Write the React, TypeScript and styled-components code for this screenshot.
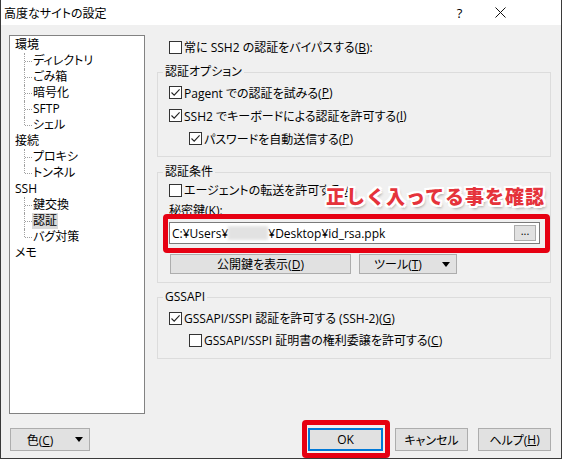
import styled, { createGlobalStyle } from 'styled-components';

const GlobalStyle = createGlobalStyle`
  html, body {
    margin: 0;
    padding: 0;
    background: #ffffff;
  }
  body {
    font-family: "Open Sans", "Noto Sans CJK JP", sans-serif;
    font-size: 12px;
    color: #000;
    font-feature-settings: "palt";
  }
`;

type TreeNode = { label: string; children: string[] };

const tree: TreeNode[] = [
  { label: '環境', children: ['ディレクトリ', 'ごみ箱', '暗号化', 'SFTP', 'シェル'] },
  { label: '接続', children: ['プロキシ', 'トンネル'] },
  { label: 'SSH', children: ['鍵交換', '認証', 'バグ対策'] },
  { label: 'メモ', children: [] },
];

const Check = ({ checked }: { checked?: boolean }) => (
  <Box>
    {checked && (
      <svg width="11" height="11" viewBox="0 0 11 11">
        <path d="M1.5 5.5 L4.2 8.2 L9.6 2.4" fill="none" stroke="#222" strokeWidth="1.1" />
      </svg>
    )}
  </Box>
);

const App = () => {
  return (
    <>
      <GlobalStyle />
      <Window>
        <TitleBar>
          <Title>高度なサイトの設定</Title>
          <TitleButton>?</TitleButton>
          <TitleButton>
            <svg width="11" height="11" viewBox="0 0 11 11">
              <path d="M0.5 0.5 L10.5 10.5 M10.5 0.5 L0.5 10.5" stroke="#111" strokeWidth="1" />
            </svg>
          </TitleButton>
        </TitleBar>

        <Body>
          <Main>
            <Tree>
              {tree.map((node) => (
                <div key={node.label}>
                  <TreeItem>{node.label}</TreeItem>
                  {node.children.map((c, i) => (
                    <Child key={c} $last={i === node.children.length - 1}>
                      <ItemText $selected={c === '認証'}>{c}</ItemText>
                    </Child>
                  ))}
                </div>
              ))}
            </Tree>

            <Panel>
              <TopRow>
                <Check />
                常に SSH2 の認証をバイパスする(<u>B</u>):
              </TopRow>

              <Group>
                <Legend>認証オプション</Legend>
                <GroupBody $top={1} $bottom={6}>
                  <CheckRow>
                    <Check checked />
                    Pagent での認証を試みる(<u>P</u>)
                  </CheckRow>
                  <CheckRow>
                    <Check checked />
                    SSH2 でキーボードによる認証を許可する(<u>I</u>)
                  </CheckRow>
                  <CheckRow $indent>
                    <Check checked />
                    パスワードを自動送信する(<u>P</u>)
                  </CheckRow>
                </GroupBody>
              </Group>

              <Group $gap={7}>
                <Legend>認証条件</Legend>
                <GroupBody $top={0} $bottom={8}>
                  <CheckRow $h={20}>
                    <Check />
                    エージェントの転送を許可する(<u>A</u>)
                  </CheckRow>
                  <KeyLabel>
                    秘密鍵(<u>K</u>):
                  </KeyLabel>
                  <FieldWrap>
                    <Field>
                      C:¥Users¥<Blur />¥Desktop¥id_rsa.ppk
                      <BrowseButton>...</BrowseButton>
                    </Field>
                    <RedFrame $t={-8} $l={-6} $r={-10} $b={-9} />
                  </FieldWrap>
                  <ButtonRow>
                    <Button $w={181} $h={20}>
                      公開鍵を表示(<u>D</u>)
                    </Button>
                    <Button $w={98} $h={20}>
                      <SplitLabel>
                        ツール(<u>T</u>)
                      </SplitLabel>
                      <Arrow />
                    </Button>
                  </ButtonRow>
                </GroupBody>
                <Annotation>正しく入ってる事を確認</Annotation>
              </Group>

              <Group $gap={6}>
                <Legend>GSSAPI</Legend>
                <GroupBody $top={2} $bottom={7}>
                  <CheckRow $h={22}>
                    <Check checked />
                    GSSAPI/SSPI 認証を許可する (SSH-2)(<u>G</u>)
                  </CheckRow>
                  <CheckRow $h={22} $indent>
                    <Check />
                    GSSAPI/SSPI 証明書の権利委譲を許可する(<u>C</u>)
                  </CheckRow>
                </GroupBody>
              </Group>
            </Panel>
          </Main>

          <Footer>
            <Button $w={80}>
              <SplitLabel>
                色(<u>C</u>)
              </SplitLabel>
              <Arrow />
            </Button>
            <OkWrap>
              <Button $w={75} $primary>
                OK
              </Button>
              <RedFrame $t={-8} $l={-6} $r={-7} $b={-7} />
            </OkWrap>
            <Button $w={73} $gap={12}>
              キャンセル
            </Button>
            <Button $w={73} $gap={10}>
              ヘルプ(<u>H</u>)
            </Button>
          </Footer>
        </Body>
      </Window>
    </>
  );
};

export default App;

const Window = styled.div`
  width: 562px;
  height: 459px;
  box-sizing: border-box;
  border: 1px solid #3a3a3a;
  border-top: none;
  background: #f0f0f0;
  display: flex;
  flex-direction: column;
`;

const TitleBar = styled.div`
  height: 25px;
  flex: none;
  background: #ffffff;
  display: flex;
  align-items: center;
  padding-left: 3px;
  padding-right: 40px;
`;

const Title = styled.div`
  flex: 1;
  font-size: 12px;
`;

const TitleButton = styled.div`
  width: 41px;
  height: 25px;
  display: flex;
  align-items: center;
  justify-content: center;
  font-size: 13px;
`;

const Body = styled.div`
  flex: 1;
  display: flex;
  flex-direction: column;
  padding: 10px 10px 0 8px;
`;

const Main = styled.div`
  display: flex;
  gap: 12px;
`;

const Tree = styled.div`
  width: 136px;
  height: 379px;
  box-sizing: border-box;
  border: 1px solid #828282;
  background: #ffffff;
  padding: 1px 0 0 5px;
`;

const TreeItem = styled.div`
  height: 16px;
  line-height: 16px;
  white-space: nowrap;
`;

const Child = styled.div<{ $last: boolean }>`
  position: relative;
  height: 16px;
  line-height: 16px;
  padding-left: 17px;
  white-space: nowrap;

  &::before {
    content: '';
    position: absolute;
    left: 9px;
    top: 0;
    height: ${({ $last }) => ($last ? '8px' : '16px')};
    border-left: 1px dotted #a0a0a0;
  }

  &::after {
    content: '';
    position: absolute;
    left: 10px;
    top: 8px;
    width: 7px;
    border-top: 1px dotted #a0a0a0;
  }
`;

const ItemText = styled.span<{ $selected?: boolean }>`
  display: inline-block;
  padding: 0 1px;
  background: ${({ $selected }) => ($selected ? '#d9d9d9' : 'transparent')};
`;

const Panel = styled.div`
  flex: 1;
  display: flex;
  flex-direction: column;
`;

const TopRow = styled.label`
  height: 24px;
  margin-bottom: 5px;
  padding-left: 12px;
  display: flex;
  align-items: center;
  white-space: nowrap;
`;

const Box = styled.span`
  width: 13px;
  height: 13px;
  box-sizing: border-box;
  border: 1px solid #333333;
  background: #ffffff;
  margin-right: 2px;
  display: flex;
  align-items: center;
  justify-content: center;
  flex: none;
`;

const Group = styled.fieldset<{ $gap?: number }>`
  position: relative;
  margin: ${({ $gap }) => $gap ?? 0}px 0 0 0;
  padding: 0 10px 0 11px;
  border: 1px solid #dcdcdc;
  min-width: 0;
`;

const Legend = styled.legend`
  padding: 0 2px;
  margin-left: -6px;
  height: 16px;
  line-height: 16px;
`;

const GroupBody = styled.div<{ $top: number; $bottom: number }>`
  display: flex;
  flex-direction: column;
  padding: ${({ $top }) => $top}px 0 ${({ $bottom }) => $bottom}px 0;
`;

const CheckRow = styled.label<{ $indent?: boolean; $h?: number }>`
  display: flex;
  align-items: center;
  height: ${({ $h }) => $h ?? 23}px;
  padding-left: ${({ $indent }) => ($indent ? 20 : 0)}px;
  white-space: nowrap;
`;

const KeyLabel = styled.div`
  height: 21px;
  line-height: 21px;
`;

const FieldWrap = styled.div`
  position: relative;
  margin-top: 1px;
`;

const Field = styled.div`
  height: 22px;
  box-sizing: border-box;
  border: 1px solid #7a7a7a;
  background: #ffffff;
  display: flex;
  align-items: center;
  padding: 0 3px 0 2px;
  white-space: nowrap;
`;

const Blur = styled.span`
  display: inline-block;
  width: 40px;
  height: 14px;
  background: #e2e2e2;
  filter: blur(1.5px);
`;

const BrowseButton = styled.button`
  margin-left: auto;
  width: 22px;
  height: 16px;
  box-sizing: border-box;
  background: #e1e1e1;
  border: 1px solid #adadad;
  padding: 0 0 4px;
  font: inherit;
  font-size: 11px;
  line-height: 10px;
  color: #000;
`;

const RedFrame = styled.span<{ $t: number; $l: number; $r: number; $b: number }>`
  position: absolute;
  top: ${({ $t }) => $t}px;
  left: ${({ $l }) => $l}px;
  right: ${({ $r }) => $r}px;
  bottom: ${({ $b }) => $b}px;
  border: 5px solid #e60012;
  border-radius: 4px;
  pointer-events: none;
`;

const ButtonRow = styled.div`
  display: flex;
  gap: 8px;
  margin-top: 10px;
  padding-left: 1px;
`;

const Button = styled.button<{ $w: number; $h?: number; $gap?: number; $primary?: boolean }>`
  width: ${({ $w }) => $w}px;
  height: ${({ $h }) => $h ?? 23}px;
  margin-left: ${({ $gap }) => $gap ?? 0}px;
  box-sizing: border-box;
  background: #e1e1e1;
  border: 1px solid ${({ $primary }) => ($primary ? '#0078d7' : '#adadad')};
  box-shadow: ${({ $primary }) => ($primary ? 'inset 0 0 0 1px #0078d7' : 'none')};
  font: inherit;
  color: #000;
  padding: 0;
  display: flex;
  align-items: center;
  justify-content: center;
  white-space: nowrap;
`;

const SplitLabel = styled.span`
  flex: 1;
  text-align: center;
`;

const Arrow = styled.span`
  width: 20px;
  display: flex;
  justify-content: center;

  &::before {
    content: '';
    border-left: 4px solid transparent;
    border-right: 4px solid transparent;
    border-top: 5px solid #000;
  }
`;

const Annotation = styled.div`
  position: absolute;
  left: 168px;
  top: 5px;
  font-family: "Noto Sans CJK JP", sans-serif;
  font-feature-settings: normal;
  font-weight: 900;
  font-size: 19px;
  line-height: 22px;
  letter-spacing: 1px;
  color: #e5333b;
  white-space: nowrap;
  text-shadow: -2px 0 #fff, 2px 0 #fff, 0 -2px #fff, 0 2px #fff, -2px -2px #fff, 2px 2px #fff,
    -2px 2px #fff, 2px -2px #fff, 2px 3px 3px rgba(0, 0, 0, 0.35);
`;

const Footer = styled.div`
  display: flex;
  margin-top: 14px;
  padding-left: 1px;
`;

const OkWrap = styled.div`
  position: relative;
  margin-left: auto;
`;
